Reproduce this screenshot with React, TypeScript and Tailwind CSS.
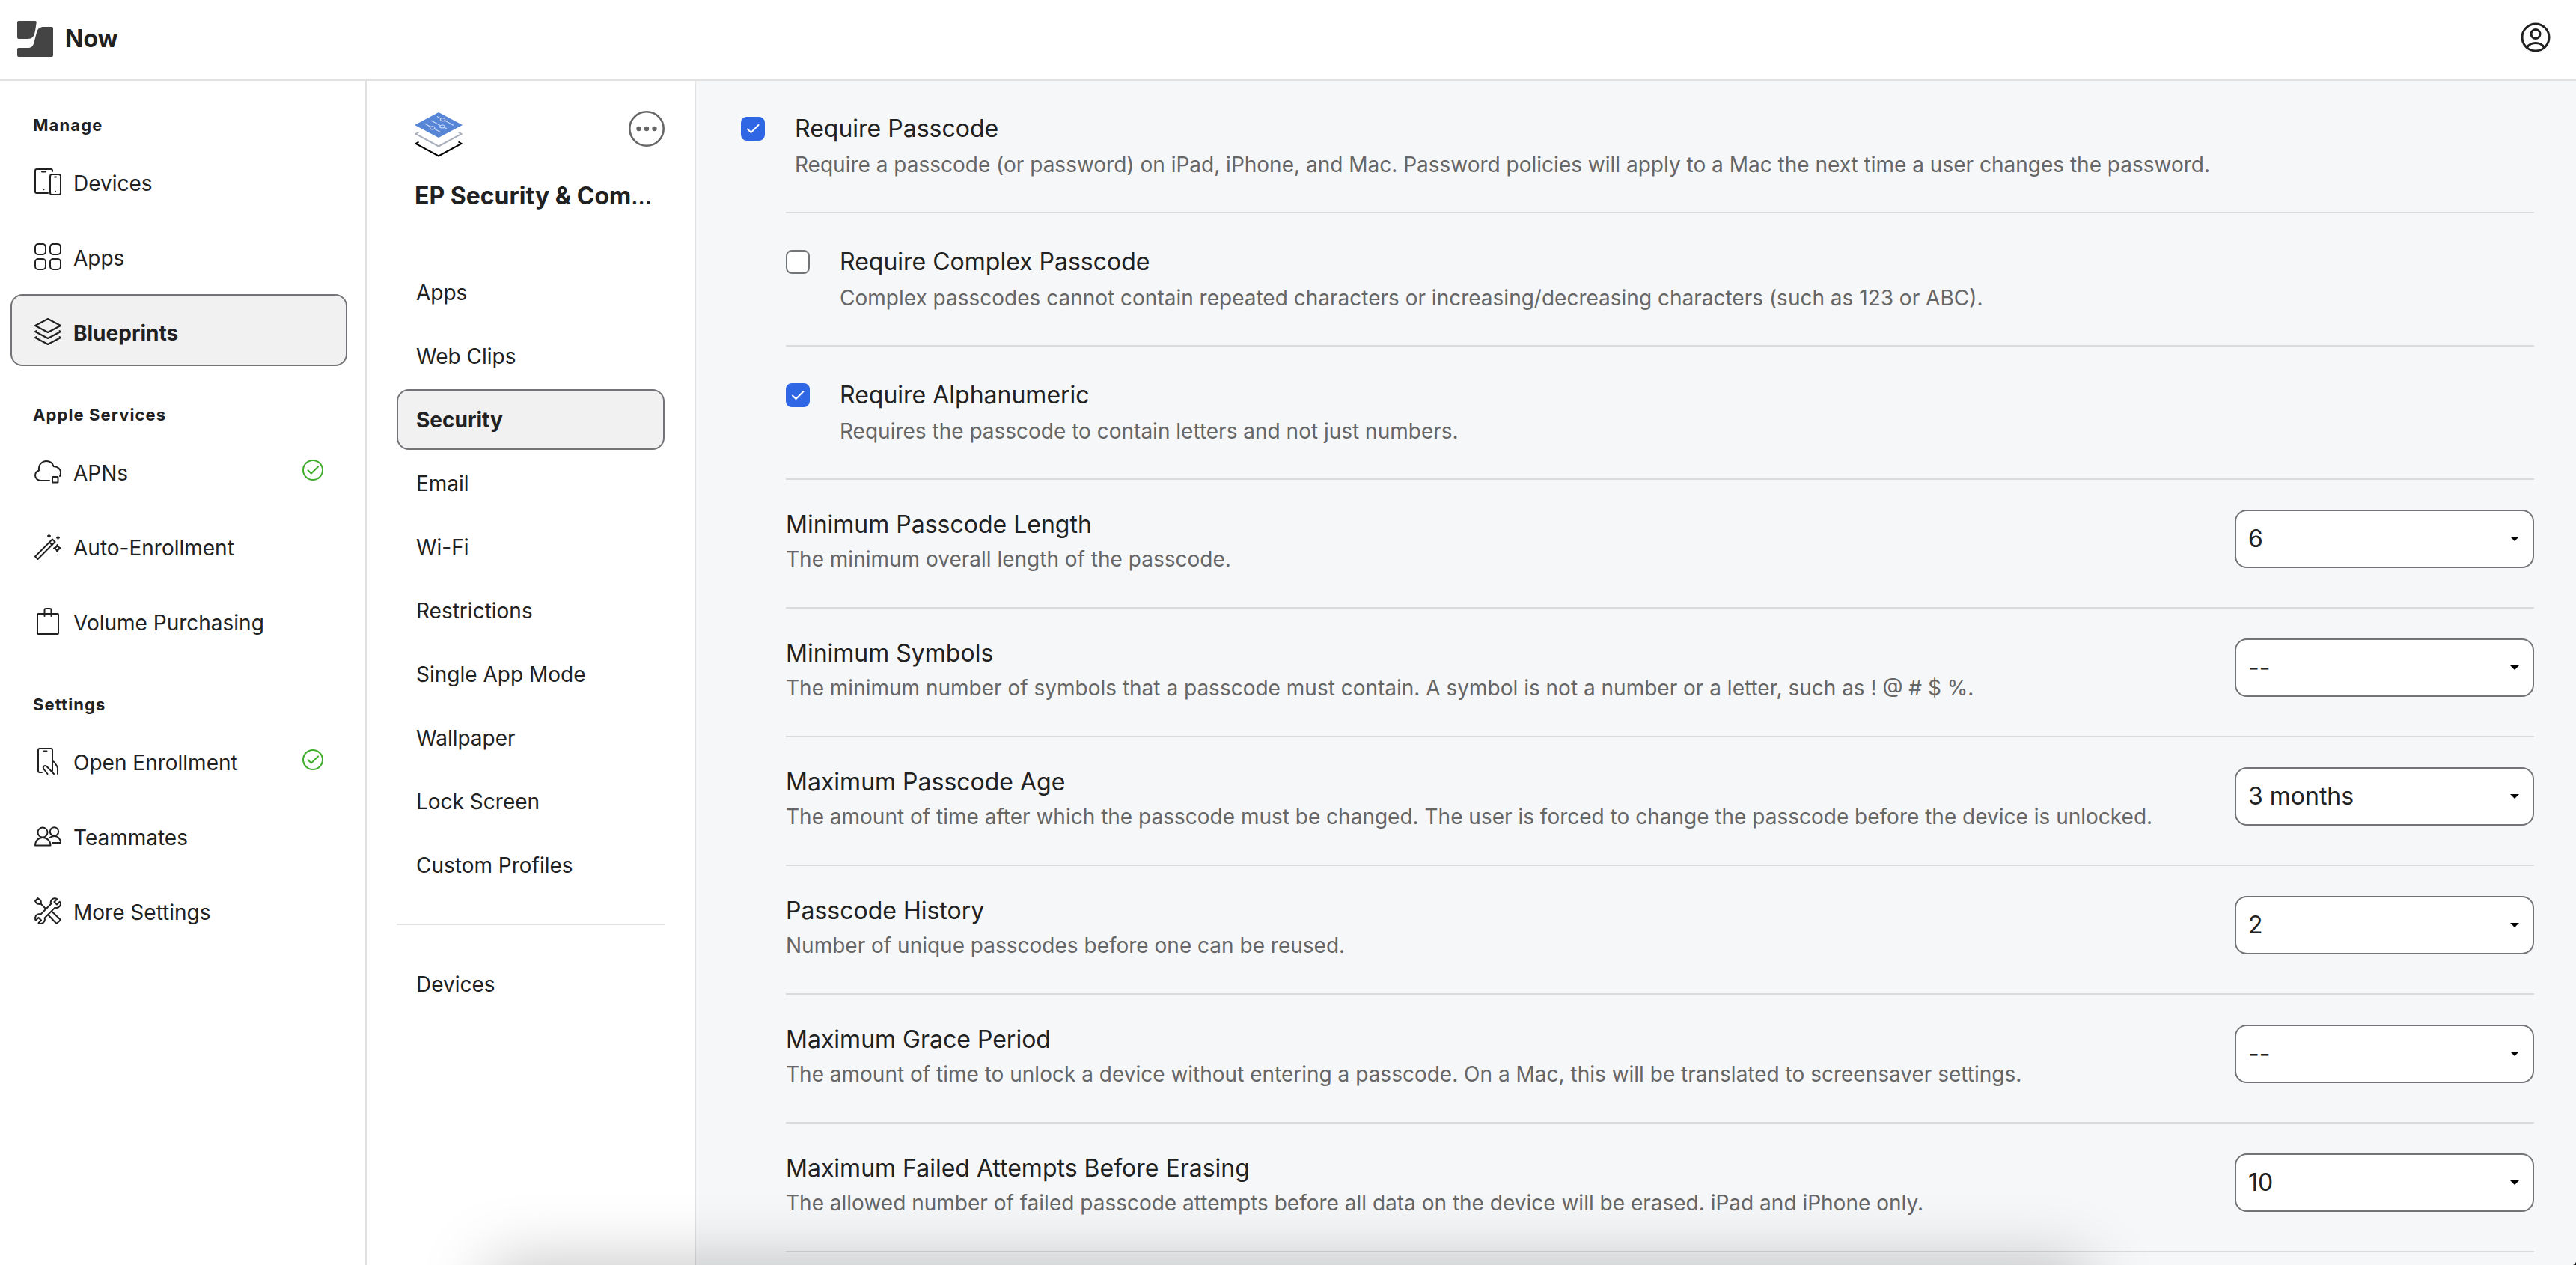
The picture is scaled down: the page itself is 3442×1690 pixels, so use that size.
import React, { useState } from "react";

type IconProps = { className?: string };

const stroke = {
  fill: "none",
  stroke: "currentColor",
  strokeWidth: 2,
  strokeLinecap: "round" as const,
  strokeLinejoin: "round" as const,
};

function Icon({ children, className = "" }: React.PropsWithChildren<IconProps>) {
  return (
    <svg viewBox="0 0 36 36" className={`size-9 shrink-0 ${className}`} aria-hidden="true" {...stroke}>
      {children}
    </svg>
  );
}

const DevicesIcon = () => (
  <Icon>
    <path d="M24 4V3a2 2 0 0 0-2-2H3a2 2 0 0 0-2 2v28a2 2 0 0 0 2 2h15" />
    <rect x="21" y="8" width="14" height="27" rx="2.5" />
    <path d="M10 4.5h5M27 11.5h2" />
    <path d="M12.5 28.2v.1M28 30.8v.1" />
  </Icon>
);

const AppsIcon = () => (
  <Icon>
    <rect x="1" y="1" width="14" height="14" rx="4" />
    <rect x="21" y="1" width="14" height="14" rx="4" />
    <rect x="1" y="21" width="14" height="14" rx="4" />
    <rect x="21" y="21" width="14" height="14" rx="4" />
  </Icon>
);

const BlueprintsIcon = () => (
  <Icon>
    <path d="M18 1 1 10l17 9 17-9z" />
    <path d="M2.500 17 1 18l17 9 17-9-1.500-1" />
    <path d="M2.500 25 1 26l17 9 17-9-1.500-1" />
  </Icon>
);

const CloudIcon = () => (
  <Icon>
    <path d="M20 30H8.500C4.500 30 1 27 1 23c0-3.500 2-5.500 5-6.500C5 9 10 4 16 4c5 0 8.500 3 9.800 7.200C31.500 11 35 15 35 19.500c0 1.600-.3 3-1 4.500" />
    <rect x="24" y="25" width="7.500" height="7.500" rx=".5" />
  </Icon>
);

const WandIcon = () => (
  <Icon>
    <path d="M1 31.500 24 8.500l3.500 3.500L4.500 35z" />
    <path d="m20 12.500 3.500 3.500" />
    <path d="M19.500 2.500v3M18 4h3M31.500 5v3M30 6.500h3" />
    <path d="M30.500 16c.6 2.700 1.800 3.900 4.500 4.500-2.700.6-3.900 1.800-4.500 4.500-.6-2.700-1.800-3.900-4.500-4.500 2.700-.6 3.900-1.800 4.500-4.500z" />
  </Icon>
);

const BagIcon = () => (
  <Icon>
    <rect x="4" y="8" width="28" height="27" rx="1" />
    <path d="M13.500 11V3a2 2 0 0 1 2-2h5a2 2 0 0 1 2 2v8" />
  </Icon>
);

const HandPhoneIcon = () => (
  <Icon>
    <path d="M10 33H7a2 2 0 0 1-2-2V3a2 2 0 0 1 2-2h15a2 2 0 0 1 2 2v28" />
    <path d="M12.500 4.500h4" />
    <path d="M24 18c1.500 0 2.500 1 3.500 2.500l2.500 4c.6 1 1 2 1 3V35" />
    <path d="m17.500 35-5-6.500c-1.200-2-.8-3.500.5-4.200s2.500-.2 3.800 1L26 35" />
  </Icon>
);

const TeamIcon = () => (
  <Icon>
    <circle cx="11" cy="13" r="6.500" />
    <circle cx="26.500" cy="12" r="5.700" />
    <path d="M1 30.500C1 24.500 5 20 11 20s10.500 4.500 10.500 10.500z" />
    <path d="M20.500 20c1.700-1.300 3.700-2 6-2C31.500 18 35 21.500 35 27H24.500" />
  </Icon>
);

const ToolsIcon = () => (
  <Icon>
    <path d="M33.800 5.800 30 9.500l-3.500-3.500 3.800-3.800c-1-.8-2.500-1.200-4-.9-3.500.7-5.300 4-4.200 7.400L8.500 22.500c-3.500-1.200-7 .8-7.400 4.500-.2 1.300 0 2.600.7 3.600L5.500 27 9 30.500l-3.500 3.700c1.200.8 2.700 1 4.200.6 3.300-.9 4.900-4 3.900-7.300l13.900-13.900c3.500 1.100 6.800-.9 7.400-4.400.2-1.200 0-2.400-1.100-3.400z" />
    <path d="m4.500 1 4 3 .5 4-1.500 1-4-.5L1 5zM9 9l6.500 6.500" />
    <path d="m18.500 23.500 11 11.500 5.500-5-11.500-11" />
  </Icon>
);

const StatusOk = () => (
  <svg viewBox="0 0 28 28" className="mt-0.5 ml-auto size-7 shrink-0 text-[#3fae2a]" role="img" aria-label="Configured" {...stroke}>
    <circle cx="14" cy="14" r="13" />
    <path d="m7.500 14.200 4.300 4.300 9.200-9" />
  </svg>
);

const Logo = () => (
  <svg viewBox="0 0 48 48" className="size-12" role="img" aria-label="Logo" fill="#444">
    <path d="M2 0h22q2 0 1.700 2c-.7 4.500-1.200 9.500-2.200 13.500C22.300 20.500 20 24 14 24H2a2 2 0 0 1-2-2V2a2 2 0 0 1 2-2z" />
    <path d="M36 8h10a2 2 0 0 1 2 2v36a2 2 0 0 1-2 2H2a2 2 0 0 1-2-2v-8a2 2 0 0 1 2-2h12c5.500 0 7-2 8.500-7.500l3.500-13C27.500 10 30 8 36 8z" />
  </svg>
);

const ProfileIcon = () => (
  <svg viewBox="0 0 40 40" className="size-10" aria-hidden="true" {...stroke} strokeWidth={3}>
    <circle cx="20" cy="20" r="18" />
    <circle cx="20" cy="15.500" r="6" />
    <path d="M8.500 33.500C11 29.500 15 27.500 20 27.500s9 2 11.500 6" />
  </svg>
);

const MoreIcon = () => (
  <svg viewBox="0 0 48 48" className="size-12" aria-hidden="true" fill="#666">
    <circle cx="24" cy="24" r="22.700" fill="none" stroke="#666" strokeWidth="2.600" />
    <circle cx="13.500" cy="24" r="3.200" />
    <circle cx="24" cy="24" r="3.200" />
    <circle cx="34.500" cy="24" r="3.200" />
  </svg>
);

const StackArt = () => (
  <svg viewBox="0 0 64 60" className="h-15 w-16" aria-hidden="true" fill="none">
    <path d="M32 0 64 17 32 34 0 17z" fill="#5886d6" />
    <g stroke="#c9dafa" strokeWidth="1.200">
      <path d="m30 5.500 4.500 2.500M40.500 11 52 17.500" />
      <path d="M22 11 34 17.500M40.500 20.500 43 22" />
      <path d="m13.500 15 7 4M27 22.500l7.500 4" />
      <ellipse cx="37.500" cy="9.700" rx="3.200" ry="2" />
      <ellipse cx="37" cy="19" rx="3.200" ry="2" />
      <ellipse cx="23.700" cy="20.800" rx="3.200" ry="2" />
    </g>
    <path d="M5.500 26.500 1.500 29 32 45.500 62.500 29l-4-2.500" stroke="#a9afbd" strokeWidth="2" />
    <path d="M5.500 39.500 1.500 42 32 58.500 62.500 42l-4-2.500" stroke="#000" strokeWidth="2" />
  </svg>
);

type NavEntry = { label: string; icon: () => React.ReactElement; active?: boolean; ok?: boolean };

const SECTIONS: { title: string; items: NavEntry[] }[] = [
  {
    title: "Manage",
    items: [
      { label: "Devices", icon: DevicesIcon },
      { label: "Apps", icon: AppsIcon },
      { label: "Blueprints", icon: BlueprintsIcon, active: true },
    ],
  },
  {
    title: "Apple Services",
    items: [
      { label: "APNs", icon: CloudIcon, ok: true },
      { label: "Auto-Enrollment", icon: WandIcon },
      { label: "Volume Purchasing", icon: BagIcon },
    ],
  },
  {
    title: "Settings",
    items: [
      { label: "Open Enrollment", icon: HandPhoneIcon, ok: true },
      { label: "Teammates", icon: TeamIcon },
      { label: "More Settings", icon: ToolsIcon },
    ],
  },
];

const BLUEPRINT_TABS = [
  "Apps",
  "Web Clips",
  "Security",
  "Email",
  "Wi-Fi",
  "Restrictions",
  "Single App Mode",
  "Wallpaper",
  "Lock Screen",
  "Custom Profiles",
];

const SELECT_ROWS = [
  {
    id: "min-length",
    title: "Minimum Passcode Length",
    text: "The minimum overall length of the passcode.",
    value: "6",
    options: ["--", "4", "5", "6", "7", "8"],
  },
  {
    id: "min-symbols",
    title: "Minimum Symbols",
    text: "The minimum number of symbols that a passcode must contain. A symbol is not a number or a letter, such as ! @ # $ %.",
    value: "--",
    options: ["--", "1", "2", "3", "4"],
  },
  {
    id: "max-age",
    title: "Maximum Passcode Age",
    text: "The amount of time after which the passcode must be changed. The user is forced to change the passcode before the device is unlocked.",
    value: "3 months",
    options: ["--", "1 month", "3 months", "6 months"],
  },
  {
    id: "history",
    title: "Passcode History",
    text: "Number of unique passcodes before one can be reused.",
    value: "2",
    options: ["--", "1", "2", "3"],
  },
  {
    id: "grace",
    title: "Maximum Grace Period",
    text: "The amount of time to unlock a device without entering a passcode. On a Mac, this will be translated to screensaver settings.",
    value: "--",
    options: ["--", "1 minute", "5 minutes"],
  },
  {
    id: "attempts",
    title: "Maximum Failed Attempts Before Erasing",
    text: "The allowed number of failed passcode attempts before all data on the device will be erased. iPad and iPhone only.",
    value: "10",
    options: ["--", "5", "10"],
  },
];

function NavItem({ label, icon: Glyph, active, ok }: NavEntry) {
  return (
    <li>
      <a
        href="#"
        aria-current={active ? "page" : undefined}
        className={`flex h-24 items-start gap-4 rounded-2xl border-2 px-[30px] pt-[30px] text-[28px] leading-10 ${
          active ? "border-[#737477] bg-[#f1f1f1] font-bold" : "border-transparent"
        }`}
      >
        <Glyph />
        <span>{label}</span>
        {ok && <StatusOk />}
      </a>
    </li>
  );
}

function TabItem({ label, active }: { label: string; active?: boolean }) {
  return (
    <a
      href="#"
      aria-current={active ? "page" : undefined}
      className={`flex h-[81px] items-center rounded-2xl border-2 px-6 text-[28px] leading-10 ${
        active ? "border-[#737477] bg-[#f1f1f1] font-bold" : "border-transparent"
      }`}
    >
      {label}
    </a>
  );
}

function CheckRow({ id, title, text, initial }: { id: string; title: string; text: string; initial: boolean }) {
  const [on, setOn] = useState(initial);
  return (
    <div className="flex gap-10 pb-[43px]">
      <span className="relative size-8 shrink-0">
        <input
          id={id}
          type="checkbox"
          checked={on}
          onChange={() => setOn(!on)}
          aria-describedby={`${id}-text`}
          className="block size-8 appearance-none rounded-lg border-2 border-[#737477] bg-white checked:border-[#2f66e4] checked:bg-[#2f66e4]"
        />
        {on && (
          <svg viewBox="0 0 32 32" className="pointer-events-none absolute inset-0 size-8 text-white" aria-hidden="true" {...stroke}>
            <path d="m9 16.500 4.500 4.500L23.500 11" />
          </svg>
        )}
      </span>
      <div>
        <label htmlFor={id} className="block text-[32px] leading-8">
          {title}
        </label>
        <p id={`${id}-text`} className="mt-3 text-[28px] leading-10 text-[#666]">
          {text}
        </p>
      </div>
    </div>
  );
}

function SelectRow({ row }: { row: (typeof SELECT_ROWS)[number] }) {
  return (
    <div className="flex items-start justify-between gap-10 border-b-2 border-[#dadbdd] pt-10 pb-11">
      <div>
        <label htmlFor={row.id} className="block text-[32px] leading-10">
          {row.title}
        </label>
        <p className="mt-1.5 text-[28px] leading-10 text-[#666]">{row.text}</p>
      </div>
      <span className="relative w-[400px] shrink-0">
        <select
          id={row.id}
          defaultValue={row.value}
          className="block h-[78px] w-full appearance-none rounded-2xl border-2 border-[#737477] bg-white px-4 text-[32px]"
        >
          {row.options.map((o) => (
            <option key={o}>{o}</option>
          ))}
        </select>
        <svg viewBox="0 0 12 6" className="pointer-events-none absolute top-9 right-5 h-1.5 w-3" aria-hidden="true">
          <path d="M0 0h12L6 6z" fill="#000" />
        </svg>
      </span>
    </div>
  );
}

export default function App() {
  return (
    <div className="relative flex h-screen flex-col overflow-hidden bg-white font-['Inter',sans-serif] text-[#212121]">
      <header className="flex h-27 shrink-0 items-center justify-between border-b-2 border-[#e1e1e1] pr-[34px] pb-0.5 pl-[23px]">
        <a href="#" className="flex items-center gap-4 text-[32px] leading-12 font-bold">
          <Logo />
          Now
        </a>
        <button type="button" aria-label="Account" className="pb-1">
          <ProfileIcon />
        </button>
      </header>

      <div className="flex min-h-0 flex-1">
        <nav aria-label="Main" className="flex w-[490px] shrink-0 flex-col gap-[49px] border-r-2 border-[#e1e1e1] pt-[43px] pr-6 pl-3.5">
          {SECTIONS.map((s) => (
            <section key={s.title}>
              <h2 className="mb-2.5 pl-[30px] text-[22px] leading-8 font-bold tracking-wider">{s.title}</h2>
              <ul className="flex flex-col gap-1">
                {s.items.map((item) => (
                  <NavItem key={item.label} {...item} />
                ))}
              </ul>
            </section>
          ))}
        </nav>

        <aside className="w-[440px] shrink-0 border-r-2 border-[#e1e1e1] px-10 pt-10">
          <div className="flex items-start justify-between pl-6">
            <div className="pt-0.5">
              <StackArt />
            </div>
            <button type="button" aria-label="More actions">
              <MoreIcon />
            </button>
          </div>
          <h1 className="mt-8 pl-6 text-[32px] leading-10 font-bold whitespace-nowrap">
            EP Security &amp; Com<span className="font-normal">...</span>
          </h1>
          <nav aria-label="Blueprint" className="mt-[68px] flex flex-col gap-1">
            {BLUEPRINT_TABS.map((t) => (
              <TabItem key={t} label={t} active={t === "Security"} />
            ))}
            <hr className="my-[34px] border-t-2 border-[#e1e1e1]" />
            <TabItem label="Devices" />
          </nav>
        </aside>

        <main className="min-w-0 flex-1 overflow-hidden bg-[#f6f7f9] pt-12 pr-14 pl-15">
          <CheckRow
            id="require-passcode"
            initial
            title="Require Passcode"
            text="Require a passcode (or password) on iPad, iPhone, and Mac. Password policies will apply to a Mac the next time a user changes the password."
          />
          <div className="pl-15">
            <div className="border-y-2 border-[#dadbdd] pt-[49px]">
              <CheckRow
                id="require-complex"
                initial={false}
                title="Require Complex Passcode"
                text="Complex passcodes cannot contain repeated characters or increasing/decreasing characters (such as 123 or ABC)."
              />
            </div>
            <div className="border-b-2 border-[#dadbdd] pt-[49px]">
              <CheckRow
                id="require-alphanumeric"
                initial
                title="Require Alphanumeric"
                text="Requires the passcode to contain letters and not just numbers."
              />
            </div>
            {SELECT_ROWS.map((row) => (
              <SelectRow key={row.id} row={row} />
            ))}
          </div>
        </main>
      </div>

      <div className="pointer-events-none absolute top-full right-[19%] left-[19%] h-40 shadow-[0_0_90px_0_rgba(0,0,0,0.25)]" />
      <svg viewBox="0 0 4 4" className="pointer-events-none absolute right-0 bottom-0 size-1" aria-hidden="true">
        <path d="M4 0v4H0q3-1 4-4z" fill="#000" />
      </svg>
    </div>
  );
}
